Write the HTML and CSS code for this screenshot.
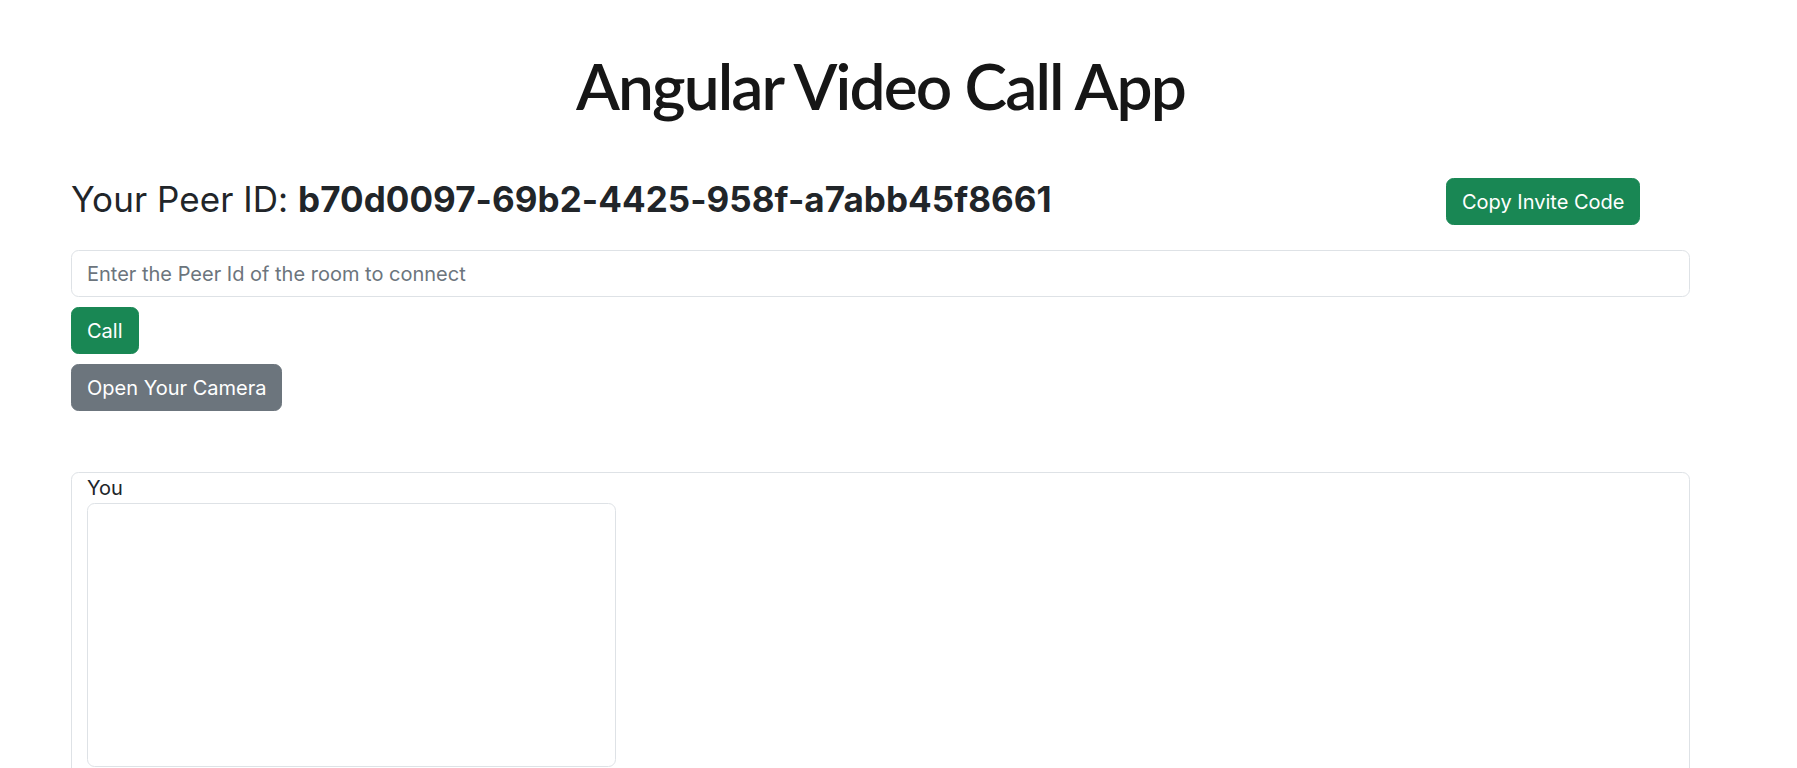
FILE: index.html
```html
<!DOCTYPE html>
<html lang="en">
<head>
<meta charset="utf-8">
<title>Angular Video Call App</title>
<link rel="stylesheet" href="styles.css">
</head>
<body>
<div class="container">
  <h1 class="title">Angular Video Call App</h1>
  <div class="peer-row">
    <h3 class="peer-id">Your Peer ID: <b>b70d0097-69b2-4425-958f-a7abb45f8661</b></h3>
    <div class="peer-action">
      <button class="btn btn-success" type="button">Copy Invite Code</button>
    </div>
  </div>
  <input class="form-control" type="text" placeholder="Enter the Peer Id of the room to connect">
  <div class="actions">
    <button class="btn btn-success" type="button">Call</button>
    <button class="btn btn-secondary" type="button">Open Your Camera</button>
  </div>
  <div class="video-card">
    <div class="video-label">You</div>
    <div class="video-box"></div>
  </div>
</div>
</body>
</html>
```
FILE: styles.css
```css
*{box-sizing:border-box}
html,body{margin:0;padding:0;background:#fff}
body{font-family:Inter,"Noto Sans",sans-serif;font-size:20px;line-height:30px;color:#212529;overflow:hidden}
.container{width:1619px;margin:0 0 0 71px}
.title{font-family:Lato,"Noto Sans",sans-serif;font-weight:600;font-size:64px;line-height:76px;letter-spacing:-1.9px;text-align:center;color:#161616;margin:48px 0 0}
.peer-row{display:grid;grid-template-columns:1fr 244px;margin-top:54px}
.peer-id{font-size:35px;line-height:42px;font-weight:400;margin:0 0 10px;white-space:nowrap;letter-spacing:0.05px}
.peer-id b{font-weight:700}
.peer-action{display:flex;align-items:flex-start}
.btn{font-family:Inter,"Noto Sans",sans-serif;font-size:20px;line-height:30px;padding:7.5px 15px;border:1px solid transparent;border-radius:7.5px;color:#fff;cursor:pointer;display:inline-block;text-align:center}
.btn-success{background:#198754;border-color:#198754}
.btn-secondary{background:#6c757d;border-color:#6c757d}
.form-control{display:block;width:100%;margin-top:20px;font-family:Inter,"Noto Sans",sans-serif;font-size:20px;line-height:30px;padding:7.5px 15px;border:1px solid #dee2e6;border-radius:7.5px;color:#212529;background:#fff;outline:none}
.form-control::placeholder{color:#6c757d;opacity:1}
.actions{display:flex;flex-direction:column;align-items:flex-start;gap:10px;margin-top:10px}
.video-card{margin-top:61px;border:1px solid #dee2e6;border-radius:7.5px;padding:0 15px 20px;min-height:400px}
.video-label{font-size:20px;line-height:30px}
.video-box{width:529px;height:264px;border:1px solid #dee2e6;border-radius:7.5px;background:#fff}
```
